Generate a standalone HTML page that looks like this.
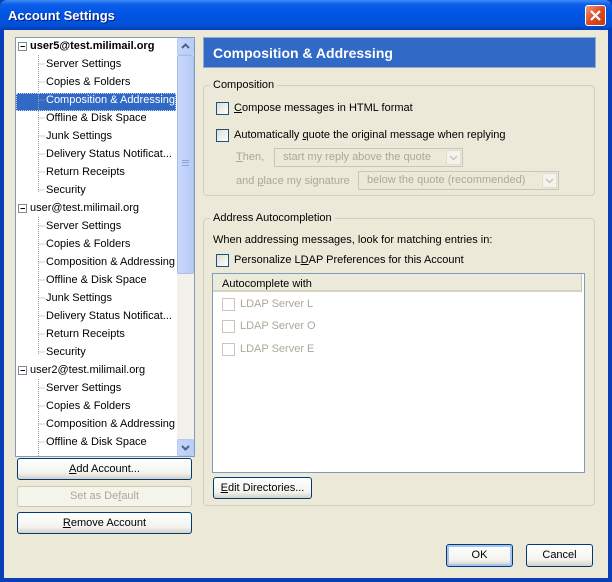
<!DOCTYPE html>
<html><head><meta charset="utf-8"><style>
*{margin:0;padding:0;box-sizing:border-box}
body{width:612px;height:582px;overflow:hidden;font-family:"Liberation Sans",sans-serif;font-size:11px;color:#000;background:#0a3fb8;position:relative}
.a{position:absolute}
.t{position:absolute;white-space:nowrap;line-height:13px}
.btn{position:absolute;border:1px solid #003c74;border-radius:3px;background:linear-gradient(#fff,#f3f3ef 70%,#d6d0c5);text-align:center;white-space:nowrap}
.cb{position:absolute;width:13px;height:13px;border:1px solid #1c5180;background:linear-gradient(135deg,#dcdcd6,#fff)}
.cbd{border-color:#cac8bb;background:#fff}
.grp{position:absolute;border:1px solid #d0d0bf;border-radius:4px}
.leg{position:absolute;background:#ece9d8;padding:0 3px;line-height:13px}
.gray{color:#aca899}
.sel{position:absolute;border:1px solid #c9c7ba;background:#ece9d8;color:#aca899;padding-left:8px;line-height:17px}
.sel i{position:absolute;right:1px;top:1px;width:15px;height:15px;border:1px solid #e0ded3;background:#f4f3ee}
u{text-decoration:underline}
.tree .c{left:30px}
.tree .h{left:14px}
</style></head><body>
<div class="a" style="left:0;top:0;width:612px;height:30px;background:linear-gradient(#3d8cf6,#0a5ee8 15%,#0054e3 50%,#0250d8 85%,#003fb5);border-radius:7px 7px 0 0"></div>
<div class="t" style="left:8px;top:8px;color:#fff;font-weight:bold;font-size:13px;line-height:16px;text-shadow:1px 1px #0a1e7a">Account Settings</div>
<div class="a" style="left:585px;top:5px;width:21px;height:21px;border:1px solid #fff;border-radius:3px;background:linear-gradient(135deg,#f09a7c,#dd4b23 50%,#c23a12)"><svg width="19" height="19" style="position:absolute;left:0;top:0"><path d="M5 5L14 14M14 5L5 14" stroke="#fff" stroke-width="2.2"/></svg></div>
<div class="a" style="left:4px;top:30px;width:604px;height:548px;background:#ece9d8"></div>
<div class="a tree" style="left:15px;top:37px;width:180px;height:420px;border:1px solid #7f9db9;background:#fff;overflow:hidden">
<div class="a" style="left:0;top:55px;width:160px;height:18px;background:#316ac5;outline:1px dotted #c8d6ff;outline-offset:-1px"></div>
<svg class="a" style="left:0;top:0" width="160" height="420"><g stroke="#a0a0a0" stroke-dasharray="1 1" fill="none">
<path d="M22.5 17V154M22.5 26H29M22.5 44H29M22.5 62H29M22.5 80H29M22.5 98H29M22.5 116H29M22.5 134H29M22.5 152H29"/>
<path d="M22.5 179V316M22.5 188H29M22.5 206H29M22.5 224H29M22.5 242H29M22.5 260H29M22.5 278H29M22.5 296H29M22.5 314H29"/>
<path d="M22.5 341V420M22.5 350H29M22.5 368H29M22.5 386H29M22.5 404H29"/>
</g>
<g fill="#fff" stroke="#7a8a99"><rect x="2.5" y="4.5" width="8" height="8"/><rect x="2.5" y="166.5" width="8" height="8"/><rect x="2.5" y="328.5" width="8" height="8"/></g>
<g stroke="#000"><path d="M4.5 8.5H9M4.5 170.5H9M4.5 332.5H9"/></g>
</svg>
<div class="t h" style="top:2px;font-weight:bold">user5@test.milimail.org</div>
<div class="t c" style="top:20px">Server Settings</div>
<div class="t c" style="top:38px">Copies &amp; Folders</div>
<div class="t c" style="top:56px;color:#fff">Composition &amp; Addressing</div>
<div class="t c" style="top:74px">Offline &amp; Disk Space</div>
<div class="t c" style="top:92px">Junk Settings</div>
<div class="t c" style="top:110px">Delivery Status Notificat...</div>
<div class="t c" style="top:128px">Return Receipts</div>
<div class="t c" style="top:146px">Security</div>
<div class="t h" style="top:164px">user@test.milimail.org</div>
<div class="t c" style="top:182px">Server Settings</div>
<div class="t c" style="top:200px">Copies &amp; Folders</div>
<div class="t c" style="top:218px">Composition &amp; Addressing</div>
<div class="t c" style="top:236px">Offline &amp; Disk Space</div>
<div class="t c" style="top:254px">Junk Settings</div>
<div class="t c" style="top:272px">Delivery Status Notificat...</div>
<div class="t c" style="top:290px">Return Receipts</div>
<div class="t c" style="top:308px">Security</div>
<div class="t h" style="top:326px">user2@test.milimail.org</div>
<div class="t c" style="top:344px">Server Settings</div>
<div class="t c" style="top:362px">Copies &amp; Folders</div>
<div class="t c" style="top:380px">Composition &amp; Addressing</div>
<div class="t c" style="top:398px">Offline &amp; Disk Space</div>
<div class="a" style="left:161px;top:0;width:17px;height:418px;background:#f3f1ec"></div>
<div class="a" style="left:161px;top:0;width:17px;height:17px;border:1px solid #b6c9f0;border-radius:2px;background:linear-gradient(90deg,#c6d6fc,#b9cdf8)"><svg width="15" height="15" class="a"><path d="M4 9L7.5 5.5L11 9" stroke="#4d6185" stroke-width="2" fill="none"/></svg></div>
<div class="a" style="left:161px;top:17px;width:17px;height:219px;border:1px solid #a9bfe8;border-radius:2px;background:linear-gradient(90deg,#c9d8fc,#b8cbf6)"><div class="a" style="left:4px;top:104px;width:7px;height:6px;border-top:1px solid #8aa4d8;border-bottom:1px solid #8aa4d8"></div><div class="a" style="left:4px;top:106px;width:7px;height:1px;background:#8aa4d8"></div></div>
<div class="a" style="left:161px;top:401px;width:17px;height:17px;border:1px solid #b6c9f0;border-radius:2px;background:linear-gradient(90deg,#c6d6fc,#b9cdf8)"><svg width="15" height="15" class="a"><path d="M4 6L7.5 9.5L11 6" stroke="#4d6185" stroke-width="2" fill="none"/></svg></div>
</div>
<div class="btn" style="left:17px;top:458px;width:175px;height:22px;line-height:20px"><u>A</u>dd Account...</div>
<div class="btn" style="left:17px;top:486px;width:175px;height:21px;line-height:19px;border-color:#cac8bb;background:#f5f4ea;color:#aca899">Set as De<u>f</u>ault</div>
<div class="btn" style="left:17px;top:512px;width:175px;height:22px;line-height:20px"><u>R</u>emove Account</div>
<div class="a" style="left:203px;top:37px;width:393px;height:31px;background:#3169c6;border:1px solid #98a8c8"></div>
<div class="t" style="left:213px;top:45px;color:#fff;font-weight:bold;font-size:14px;line-height:17px">Composition &amp; Addressing</div>
<div class="grp" style="left:203px;top:85px;width:392px;height:111px"></div>
<div class="leg" style="left:210px;top:79px">Composition</div>
<div class="cb" style="left:216px;top:102px"></div>
<div class="t" style="left:234px;top:102px"><u>C</u>ompose messages in HTML format</div>
<div class="cb" style="left:216px;top:129px"></div>
<div class="t" style="left:234px;top:129px">Automatically <u>q</u>uote the original message when replying</div>
<div class="t gray" style="left:236px;top:151px"><u>T</u>hen,</div>
<div class="sel" style="left:274px;top:148px;width:189px;height:19px">start my reply above the quote<i><svg width="13" height="13" class="a"><path d="M3 5L6.5 8.5L10 5" stroke="#c5c5c0" stroke-width="1.5" fill="none"/></svg></i></div>
<div class="t gray" style="left:236px;top:175px">and <u>p</u>lace my signature</div>
<div class="sel" style="left:358px;top:171px;width:201px;height:19px">below the quote (recommended)<i><svg width="13" height="13" class="a"><path d="M3 5L6.5 8.5L10 5" stroke="#c5c5c0" stroke-width="1.5" fill="none"/></svg></i></div>
<div class="grp" style="left:203px;top:218px;width:392px;height:288px"></div>
<div class="leg" style="left:210px;top:212px">Address Autocompletion</div>
<div class="t" style="left:213px;top:234px">When addressing messages, look for matching entries in:</div>
<div class="cb" style="left:216px;top:254px"></div>
<div class="t" style="left:234px;top:254px">Personalize L<u>D</u>AP Preferences for this Account</div>
<div class="a" style="left:212px;top:273px;width:373px;height:200px;border:1px solid #7f9db9;background:#fff"></div>
<div class="a" style="left:213px;top:274px;width:369px;height:18px;background:#ebeadb;border-bottom:2px solid #d6d2c2;border-right:1px solid #c6c3b3"></div>
<div class="t" style="left:222px;top:278px">Autocomplete with</div>
<div class="cb cbd" style="left:222px;top:298px"></div><div class="t gray" style="left:240px;top:298px">LDAP Server L</div>
<div class="cb cbd" style="left:222px;top:320px"></div><div class="t gray" style="left:240px;top:320px">LDAP Server O</div>
<div class="cb cbd" style="left:222px;top:343px"></div><div class="t gray" style="left:240px;top:343px">LDAP Server E</div>
<div class="btn" style="left:213px;top:477px;width:99px;height:22px;line-height:20px"><u>E</u>dit Directories...</div>
<div class="btn" style="left:446px;top:544px;width:67px;height:23px;line-height:21px;border-color:#003c74;box-shadow:inset 0 0 0 2px #a7c4f4">OK</div>
<div class="btn" style="left:526px;top:544px;width:67px;height:23px;line-height:21px">Cancel</div>
</body></html>
